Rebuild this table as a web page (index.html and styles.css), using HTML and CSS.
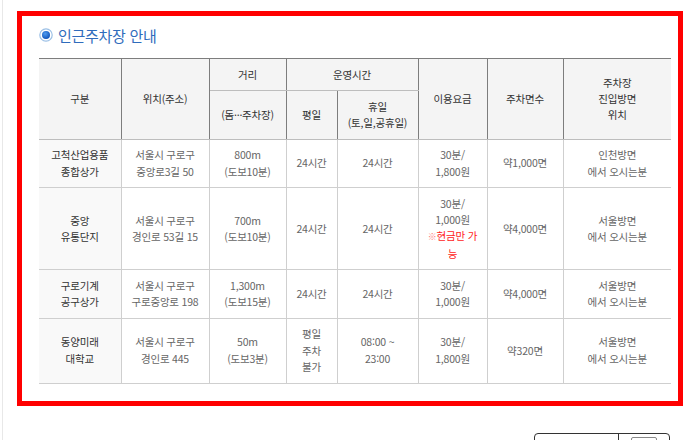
FILE: index.html
```html
<!DOCTYPE html>
<html lang="ko">
<head>
<meta charset="utf-8">
<title>인근주차장 안내</title>
<link rel="stylesheet" href="styles.css">
</head>
<body>
<div class="page">
  <section class="box">
    <h2 class="title">
      <svg class="radio" width="14" height="14" viewBox="0 0 14 14" aria-hidden="true">
        <defs>
          <radialGradient id="g1" cx="0.4" cy="0.35" r="0.7">
            <stop offset="0" stop-color="#4f9cf0"/>
            <stop offset="1" stop-color="#0b4fb8"/>
          </radialGradient>
        </defs>
        <circle cx="7" cy="7" r="6.2" fill="#fff" stroke="#9cc0e6" stroke-width="1.2"/>
        <circle cx="7" cy="7" r="4" fill="url(#g1)"/>
      </svg>
      <span>인근주차장 안내</span>
    </h2>
    <table class="park">
      <colgroup>
        <col class="c1"><col class="c2"><col class="c3"><col class="c4">
        <col class="c5"><col class="c6"><col class="c7"><col class="c8">
      </colgroup>
      <thead>
        <tr class="h1">
          <th rowspan="2">구분</th>
          <th rowspan="2">위치(주소)</th>
          <th>거리</th>
          <th colspan="2">운영시간</th>
          <th rowspan="2">이용요금</th>
          <th rowspan="2">주차면수</th>
          <th rowspan="2">주차장<br>진입방면<br>위치</th>
        </tr>
        <tr class="h2">
          <th>(돔···주차장)</th>
          <th>평일</th>
          <th>휴일<br>(토,일,공휴일)</th>
        </tr>
      </thead>
      <tbody>
        <tr>
          <th class="name">고척산업용품<br>종합상가</th>
          <td>서울시 구로구<br>중앙로3길 50</td>
          <td>800m<br>(도보10분)</td>
          <td>24시간</td>
          <td>24시간</td>
          <td>30분/<br>1,800원</td>
          <td>약1,000면</td>
          <td>인천방면<br>에서 오시는분</td>
        </tr>
        <tr>
          <th class="name">중앙<br>유통단지</th>
          <td>서울시 구로구<br>경인로 53길 15</td>
          <td>700m<br>(도보10분)</td>
          <td>24시간</td>
          <td>24시간</td>
          <td>30분/<br>1,000원<br><span class="warn"><span class="mark">※</span>현금만 가<br>능</span></td>
          <td>약4,000면</td>
          <td>서울방면<br>에서 오시는분</td>
        </tr>
        <tr>
          <th class="name">구로기계<br>공구상가</th>
          <td>서울시 구로구<br>구로중앙로 198</td>
          <td>1,300m<br>(도보15분)</td>
          <td>24시간</td>
          <td>24시간</td>
          <td>30분/<br>1,000원</td>
          <td>약4,000면</td>
          <td>서울방면<br>에서 오시는분</td>
        </tr>
        <tr>
          <th class="name">동양미래<br>대학교</th>
          <td>서울시 구로구<br>경인로 445</td>
          <td>50m<br>(도보3분)</td>
          <td>평일<br>주차<br>불가</td>
          <td>08:00 ~<br>23:00</td>
          <td>30분/<br>1,800원</td>
          <td>약320면</td>
          <td>서울방면<br>에서 오시는분</td>
        </tr>
      </tbody>
    </table>
  </section>
  <div class="pager">
    <div class="sel">
      <span class="sel-main"></span>
      <span class="sel-btn"><span class="sel-ico"></span></span>
    </div>
  </div>
</div>
</body>
</html>
```

FILE: styles.css
```css
html, body {
  margin: 0;
  padding: 0;
  background: #fff;
}
body {
  font-family: "Noto Sans CJK KR", "Noto Sans", sans-serif;
  overflow: hidden;
}
.page {
  margin-left: 2px;
  border-left: 1px solid #e8e8e8;
  min-height: 440px;
  padding-top: 11px;
  box-sizing: border-box;
}
.box {
  margin-left: 14px;
  width: 666px;
  height: 395px;
  box-sizing: border-box;
  border: 5px solid #ff0000;
  padding: 9px 0 0 17px;
}
.title {
  margin: 0 0 13px;
  height: 20px;
  display: flex;
  align-items: center;
  gap: 5px;
  font-size: 15px;
  font-weight: normal;
  letter-spacing: -0.3px;
  color: #2f6cbc;
}
.radio {
  display: block;
  flex: none;
}
.park {
  border-collapse: collapse;
  table-layout: fixed;
  width: 632px;
  font-size: 10.5px;
  line-height: 16.25px;
  letter-spacing: -0.2px;
  color: #666;
  text-align: center;
}
.c1 { width: 82px; }
.c2 { width: 88px; }
.c3 { width: 77px; }
.c4 { width: 51px; }
.c5 { width: 81px; }
.c6 { width: 69px; }
.c7 { width: 76px; }
.c8 { width: 108px; }
.park thead {
  border-top: 1px solid #7d7d7d;
}
.park thead th {
  background: #f4f4f4;
  font-weight: normal;
  color: #333;
  padding: 7.5px 2px;
  border-left: 1px solid #7d7d7d;
  border-right: 1px solid #7d7d7d;
  border-bottom: 1px solid #bdbdbd;
  vertical-align: middle;
}
.park thead tr.h1 th:first-child { border-left: none; }
.park thead tr.h1 th:last-child { border-right: none; }
.park tbody td,
.park tbody th {
  padding: 7.5px 2px;
  border: 1px solid #cfcfcf;
  vertical-align: middle;
}
.park tbody th.name {
  background: #f9f9f9;
  font-weight: normal;
  color: #333;
  border-left: none;
}
.park tbody td:last-child { border-right: none; }
.warn { color: #ff1a1a; }
.mark { color: #ff8080; font-size: 9px; }
.pager {
  display: flex;
  justify-content: flex-end;
  padding: 27px 30px 0 0;
}
.sel {
  display: flex;
  width: 136px;
  height: 24px;
  border: 1px solid #333;
  border-radius: 4px;
  box-sizing: border-box;
}
.sel-main {
  flex: 1;
  border-right: 1px solid #333;
}
.sel-btn {
  width: 50px;
  display: flex;
  justify-content: center;
  padding-top: 3px;
  box-sizing: border-box;
}
.sel-ico {
  width: 26px;
  height: 14px;
  border: 1px solid #888;
  border-radius: 2px;
  box-sizing: border-box;
}
```
